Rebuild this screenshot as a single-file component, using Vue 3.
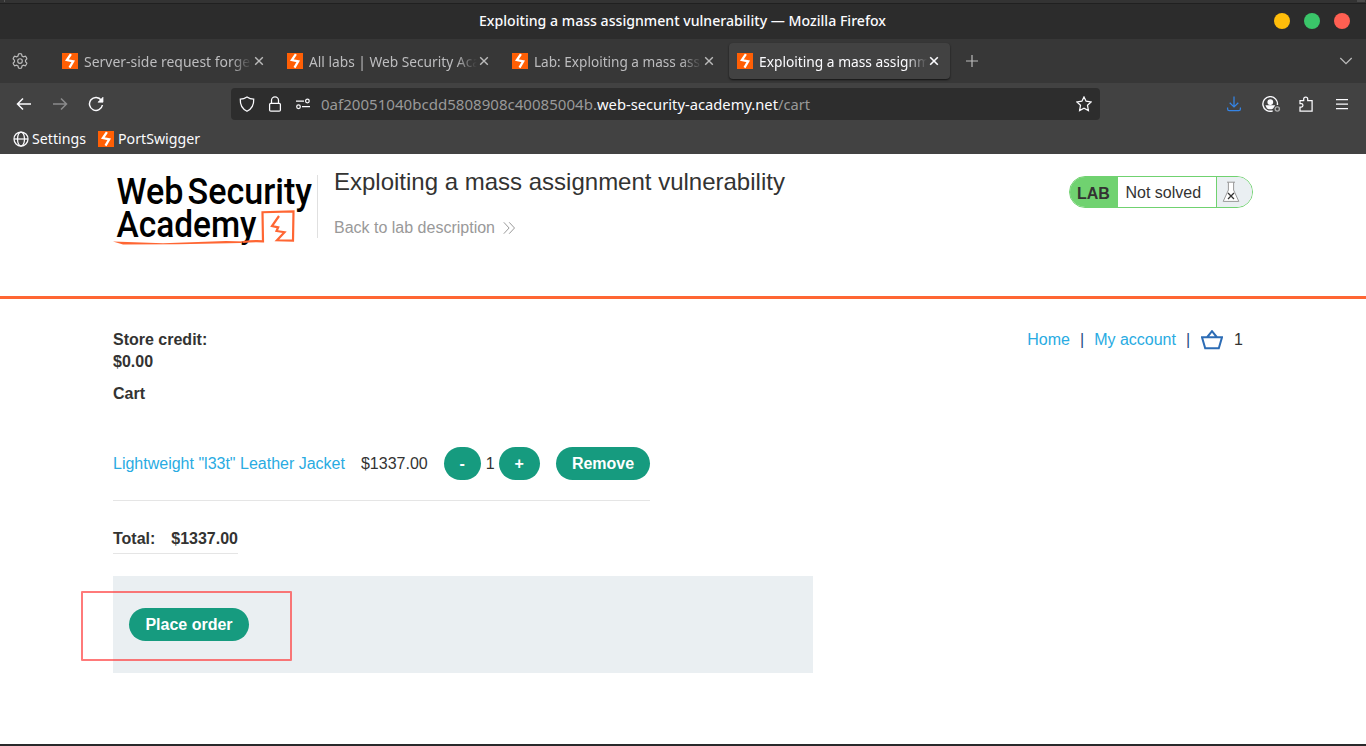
<script setup>
const tabs = [
  { title: 'Server-side request forgery', active: false, w: 179 },
  { title: 'All labs | Web Security Academy', active: false, w: 207 },
  { title: 'Lab: Exploiting a mass assignment', active: false, w: 220 },
  { title: 'Exploiting a mass assignment', active: true, w: 192 },
]
</script>

<template>
  <div class="window">
    <div class="edge"><i class="edge-left"></i><i class="edge-right"></i></div>
    <header class="titlebar">
      <svg class="ui" width="408" height="24"><text x="0" y="17" textLength="407" lengthAdjust="spacingAndGlyphs">Exploiting a mass assignment vulnerability — Mozilla Firefox</text></svg>
      <div class="controls"><i class="yellow"></i><i class="green"></i><i class="red"></i></div>
    </header>

    <div class="tabbar">
      <svg class="gear" width="16" height="16" viewBox="0 0 16 16"><path d="M6.5 1 Q8 .3 9.5 1 L10 3 11.4 3.8 13.4 3.2 Q14.6 4.2 14.9 5.8 L13.5 7.3 V8.7 L14.9 10.2 Q14.5 11.8 13.4 12.8 L11.4 12.2 10 13 9.5 15 Q8 15.7 6.5 15 L6 13 4.6 12.2 2.6 12.8 Q1.5 11.8 1.1 10.2 L2.5 8.7 V7.3 L1.1 5.8 Q1.5 4.2 2.6 3.2 L4.6 3.8 6 3Z" /><circle cx="8" cy="8" r="2.3" /></svg>
      <div class="tabs">
        <div v-for="tab in tabs" :key="tab.title" class="tab" :class="{ active: tab.active }">
          <svg class="favicon" width="16" height="16" viewBox="0 0 16 16"><rect width="16" height="16" fill="#ff5f05" /><path class="bolt" d="M8.9 1.2 4.9 7 11.2 8.4 7.5 14.6" /></svg>
          <div class="tab-title"><svg class="ui" :width="tab.w + 4" height="24"><text x="1" y="18" :textLength="tab.w" lengthAdjust="spacingAndGlyphs">{{ tab.title }}</text></svg></div>
          <svg class="close" width="10" height="10" viewBox="0 0 10 10"><path d="M1.2 1.2 8.8 8.8M8.8 1.2 1.2 8.8" /></svg>
        </div>
      </div>
      <svg class="plus" width="14" height="14" viewBox="0 0 14 14"><path d="M7 1V13M1 7H13" /></svg>
      <svg class="chevron" width="14" height="8" viewBox="0 0 14 8"><path d="M1.3 1 7 6.6 12.7 1" /></svg>
    </div>

    <div class="navbar">
      <div class="nav-buttons">
        <svg width="16" height="16" viewBox="0 0 16 16"><path d="M15 8H1.7M7 2.5 1.5 8 7 13.5" /></svg>
        <svg class="dim" width="16" height="16" viewBox="0 0 16 16"><path d="M1 8H14.3M9 2.5 14.5 8 9 13.5" /></svg>
        <svg width="16" height="16" viewBox="0 0 16 16"><path d="M13.3 4.2A6.5 6.5 0 1 0 14.4 9" /><path d="M15 1.2V6.2H10Z" fill="#fbfbfe" stroke-width=".7" /></svg>
      </div>
      <div class="urlbar">
        <div class="url-icons">
          <svg width="16" height="16" viewBox="0 0 16 16"><path d="M8 .9C10 2.3 12.4 3.1 14.7 3.2 15 8.8 12.5 13 8 15.2 3.5 13 1 8.8 1.3 3.2 3.6 3.1 6 2.3 8 .9Z" /></svg>
          <svg width="16" height="16" viewBox="0 0 16 16"><rect x="2.6" y="7.3" width="10.8" height="7.8" rx="1.2" /><path d="M4.5 7.3V4.3a3.5 3.5 0 0 1 7 0V7.3" /></svg>
          <svg width="16" height="16" viewBox="0 0 16 16"><path d="M1 5H9M7 10.7H15" /><circle cx="12.4" cy="5" r="1.8" /><circle cx="3.5" cy="10.7" r="1.8" /></svg>
        </div>
        <svg class="ui url" width="500" height="24"><text x="0" y="18" fill="#999" textLength="276" lengthAdjust="spacingAndGlyphs">0af20051040bcdd5808908c40085004b.</text><text x="276" y="18" fill="#fbfbfe" textLength="181" lengthAdjust="spacingAndGlyphs">web-security-academy.net</text><text x="457" y="18" fill="#999" textLength="32" lengthAdjust="spacingAndGlyphs">/cart</text></svg>
        <svg class="star" width="16" height="16" viewBox="0 0 16 16"><path d="M8 .9 10.1 5.2 15.1 5.9 11.5 9.3 12.4 14.5 8 12.1 3.6 14.5 4.5 9.3 .9 5.9 5.9 5.2Z" /></svg>
      </div>
      <div class="tools">
        <svg class="download" width="16" height="16" viewBox="0 0 16 16"><path d="M8 .4V11M3.7 6.8 8 11 12.3 6.8M1.6 11.5V13Q1.6 14.6 3.2 14.6H12.8Q14.4 14.6 14.4 13V11.5" /></svg>
        <svg width="20" height="16" viewBox="0 0 20 16"><path d="M15.4 9A7.3 7.3 0 1 0 10.7 14.8" /><circle cx="8.3" cy="6.1" r="2.2" fill="#fbfbfe" /><path d="M4.5 10H12L10.8 11.8Q8.2 13.5 5.4 11.8Z" fill="#fbfbfe" /><circle cx="15.3" cy="13" r="2.1" stroke="#aaa" /></svg>
        <svg width="16" height="16" viewBox="0 0 16 16"><path d="M2 15.1H14.1V4.6H9.7V3A2 2 0 0 0 5.7 3V4.6H2V7.7H3.3A1.6 1.6 0 0 1 3.3 11H2Z" /></svg>
        <svg width="16" height="16" viewBox="0 0 16 16"><path d="M2 3.5H14M2 8H14M2 12.5H14" /></svg>
      </div>
    </div>

    <div class="bookmarks">
      <svg class="globe" width="16" height="16" viewBox="0 0 16 16"><circle cx="8" cy="8" r="7" /><ellipse cx="8" cy="8" rx="3.5" ry="7" /><path d="M1 8H15" /></svg>
      <svg class="ui" width="55" height="24"><text x="0" y="17" textLength="54" lengthAdjust="spacingAndGlyphs">Settings</text></svg>
      <svg class="favicon second" width="16" height="16" viewBox="0 0 16 16"><rect width="16" height="16" fill="#ff5f05" /><path class="bolt" d="M8.9 1.2 4.9 7 11.2 8.4 7.5 14.6" /></svg>
      <svg class="ui" width="84" height="24"><text x="0" y="17" textLength="82" lengthAdjust="spacingAndGlyphs">PortSwigger</text></svg>
    </div>

    <section class="lab-header">
      <svg class="logo" width="204" height="74" viewBox="0 0 204 74">
        <g font-family="Roboto, sans-serif" font-size="37.5" font-weight="500">
          <text x="3.5" y="30.3" textLength="67" lengthAdjust="spacingAndGlyphs">Web</text>
          <text x="74.5" y="30.3" textLength="124.5" lengthAdjust="spacingAndGlyphs">Security</text>
          <text x="3.5" y="62.7" textLength="140" lengthAdjust="spacingAndGlyphs">Academy</text>
        </g>
        <path d="M0 67.5 50 69.2 113 67 133 67.5 128 69 65 70.3 10 70.5Z" fill="#ff6633" />
        <path d="M130 68Q140 66.7 150 67.3L149.5 38.2 180.5 37.3 180 66.6 164 66.3 171.5 58.2 163.5 57 165.2 53.3 159 52 166 42" fill="none" stroke="#ff6633" stroke-width="2.2" />
      </svg>
      <div class="heading">
        <h1>Exploiting a mass assignment vulnerability</h1>
        <a class="back">Back to lab description
          <svg width="13" height="12" viewBox="0 0 13 12"><path d="M.8.3 6.1 6 .8 11.7M6.2.3 11.5 6 6.2 11.7" /></svg>
        </a>
      </div>
      <div class="status">
        <b>LAB</b><span>Not solved</span>
        <div class="flask"><svg width="18" height="22" viewBox="0 0 18 22"><path class="glass" d="M5 1.2H13M6.4 1.2V9L1.2 20.4H16.8L11.6 9V1.2" /><path class="cross" d="M6 12 12 18M12 12 6 18" /></svg></div>
      </div>
    </section>

    <main class="shop">
      <nav class="links">
        <a>Home</a><i>|</i><a>My account</a><i>|</i>
        <svg width="22" height="20" viewBox="0 0 22 20"><path d="M1 7.3H21L17.8 18.3H4.2ZM6.3 7 11 1.2 15.7 7" /></svg>
        <span>1</span>
      </nav>
      <div class="credit">Store credit:<br>$0.00</div>
      <div class="cart-title">Cart</div>
      <div class="item">
        <a>Lightweight "l33t" Leather Jacket</a>
        <span class="price">$1337.00</span>
        <button class="minus">-</button><span class="qty">1</span><button class="add">+</button>
        <button class="remove">Remove</button>
      </div>
      <div class="total"><span>Total:</span><span>$1337.00</span></div>
      <div class="order"><button class="place">Place order</button><div class="highlight"></div></div>
    </main>
    <div class="bottom-edge"></div>
  </div>
</template>

<style>
body { overflow: hidden; background: #fff; }
</style>

<style scoped>
* { box-sizing: border-box; }
.window { height: 746px; display: flex; flex-direction: column; overflow: hidden; font: 16px "Liberation Sans", Arial, sans-serif; color: #333332; background: #fff; }
svg { display: block; flex: none; fill: none; stroke: #fbfbfe; stroke-width: 1.25; }
.ui { overflow: visible; }
.ui text { font: 15px "Noto Sans", sans-serif; stroke: none; }
.ui text:not([fill]) { fill: #fbfbfe; }
.edge { height: 4px; flex: none; background: #333; border-bottom: 1px solid #202020; display: flex; justify-content: space-between; }
.edge-left { width: 1px; height: 2px; margin-left: 4px; background: #555; }
.edge-right { width: 8px; height: 2px; margin-right: 1px; background: #4b4b4b; }
.titlebar { height: 35px; flex: none; display: flex; align-items: center; background: #2c2c2c; padding: 0 16px 0 479px; justify-content: space-between; }
.titlebar .ui text { font-weight: 500; font-size: 14.5px; }
.titlebar > .ui { margin-top: -2px; }
.controls { display: flex; gap: 14px; }
.controls i { width: 16px; height: 16px; border-radius: 50%; margin-top: -1px; }
.yellow { background: #ffbd0a; } .green { background: #3ac569; } .red { background: #ff5f52; }
.tabbar { height: 44px; flex: none; background: #373737; display: flex; align-items: center; padding-right: 13px; }
.gear { margin-left: 12px; stroke: #bbb; stroke-width: 1.15; }
.tabs { display: flex; gap: 4px; margin-left: 26px; }
.tab { width: 221px; height: 36px; border-radius: 4px; display: flex; align-items: center; padding: 0 11px 0 8px; }
.active { background: #424242; box-shadow: 0 1px 2px rgba(0, 0, 0, .65); }
.favicon { stroke: none; }
.bolt { stroke: #fff; stroke-width: 2.3; stroke-linejoin: miter; }
.tab-title { width: 169px; height: 24px; flex: none; margin-left: 5px; margin-right: 2px; overflow: hidden; mask-image: linear-gradient(to right, #000 148px, transparent 169px); }
.tab .ui text { fill: #bdbdbf; }
.tab.active .ui text { fill: #fbfbfe; }
.close { stroke: #bbb; stroke-width: 1.4; }
.active .close { stroke: #fbfbfe; stroke-width: 1.6; }
.plus { margin-left: 15px; stroke: #bbb; stroke-width: 1.2; }
.chevron { margin-left: auto; stroke: #bbb; stroke-width: 1.3; }
.navbar { height: 42px; flex: none; background: #424242; display: flex; align-items: center; padding: 0 16px; }
.nav-buttons { display: flex; gap: 20px; }
.nav-buttons svg { stroke-width: 1.5; }
.nav-buttons .dim { stroke: #8b8b8c; }
.urlbar { width: 869px; height: 32px; margin-left: 127px; border-radius: 4px; background: #2d2d2d; display: flex; align-items: center; padding: 0 8px; }
.url-icons { display: flex; gap: 12px; }
.url { margin-left: 10px; }
.star { margin-left: auto; }
.tools { display: flex; margin-left: auto; gap: 20px; }
.tools svg:nth-child(2) { margin-right: -4px; stroke-width: 1.4; }
.download { stroke: #3584e4; }
.bookmarks { height: 29px; flex: none; background: #424242; display: flex; align-items: center; padding-left: 13px; padding-bottom: 1px; }
.bookmarks .ui { margin-left: 4px; }
.bookmarks .globe + .ui { margin-left: 3px; }
.bookmarks .favicon.second { margin-left: 11px; }
.lab-header { height: 145px; flex: none; padding: 21px 113px 0; border-bottom: 3px solid #ff6633; display: flex; align-items: flex-start; }
.logo { margin-top: -1px; stroke: none; overflow: visible; }
.logo text { fill: #000; }
.heading { height: 63px; border-left: 1px solid #e0e0e0; padding-left: 16px; }
h1 { margin: -7px 0 0; font-size: 24px; line-height: 28px; font-weight: 400; white-space: nowrap; }
.back { display: flex; align-items: center; color: #999; margin-top: 22px; line-height: 20px; }
.back svg { margin-left: 8px; stroke: #999; stroke-width: 1; }
.status { margin-left: auto; margin-top: 1px; width: 184px; height: 32px; border: 1px solid #70d270; border-radius: 16px; display: flex; overflow: hidden; line-height: 30px; }
.status b { width: 48px; padding-left: 7px; background: #70d270; padding-top: 2px; }
.status span { flex: 1; padding-left: 7.5px; padding-top: 1px; border-right: 1px solid #70d270; }
.flask { width: 35px; background: #eaeff2; padding: 4px 0 0 5px; }
.glass { fill: #fff; stroke: #999; stroke-width: 1; }
.cross { stroke: #333; stroke-width: 1.3; }
.shop { flex: 1; position: relative; padding: 30px 113px 0; }
.links { position: absolute; right: 123px; top: 30px; display: flex; align-items: center; line-height: 22px; }
a { color: #29abe2; white-space: nowrap; }
.links i { font-style: normal; color: #1f4f80; margin: 0 10px; }
.links svg { stroke: #2c6cb5; stroke-width: 2; }
.links i:last-of-type { margin-right: 11px; }
.links span { margin-left: 11px; }
.credit, .cart-title { font-weight: bold; line-height: 22px; }
.cart-title { margin-top: 10px; }
.item { margin-top: 42px; width: 537px; height: 54px; border-bottom: 1px solid #e5e5e5; display: flex; align-items: flex-start; line-height: 33px; }
.price { margin-left: 16px; }
button { height: 33px; border: 0; border-radius: 17px; background: #169b7f; color: #fff; font: bold 16px/33px "Liberation Sans", Arial, sans-serif; padding: 0; }
.minus { width: 37px; margin-left: 16px; }
.qty { margin-left: 5px; margin-right: 4px; }
.add { width: 41px; }
.remove { width: 94px; margin-left: auto; }
.total { width: 125px; height: 26px; margin-top: 27px; border-bottom: 1px solid #e5e5e5; display: flex; justify-content: space-between; font-weight: bold; line-height: 22px; }
.order { width: 700px; height: 97px; margin-top: 22px; background: #eaeff2; padding: 32px 16px; position: relative; }
.place { width: 120px; display: block; }
.highlight { position: absolute; left: -32px; top: 15px; width: 211px; height: 70px; border: 2px solid rgba(255, 50, 50, .65); border-radius: 1px; }
.bottom-edge { height: 2px; flex: none; background: #29292b; }
</style>
